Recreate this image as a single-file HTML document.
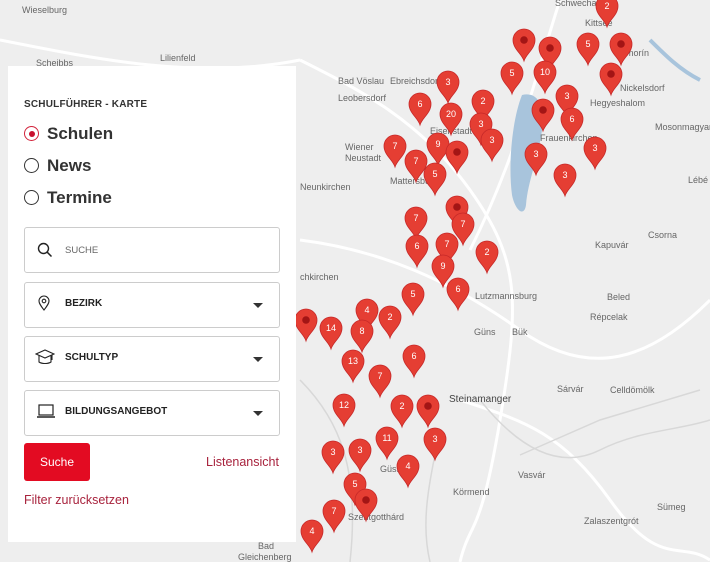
<!DOCTYPE html>
<html><head><meta charset="utf-8"><style>
html,body{margin:0;padding:0;width:710px;height:562px;overflow:hidden;background:#eeeeee;font-family:"Liberation Sans",sans-serif}
svg.map{position:absolute;left:0;top:0}
.panel{position:absolute;left:8px;top:66px;width:288px;height:476px;background:#fff}
.t{position:absolute;color:#222}
.h{left:16px;top:33px;font-size:10px;font-weight:bold;letter-spacing:.2px;color:#333}
.r{left:16px;font-size:17px;font-weight:bold;color:#333}
.r i{display:inline-block;width:13px;height:13px;border:1.5px solid #333;border-radius:50%;vertical-align:-2px;margin-right:8px;position:relative}
.r i.on{border-color:#d2223a}
.r i.on:after{content:"";position:absolute;left:3.5px;top:3.5px;width:6px;height:6px;border-radius:50%;background:#c8102e}
.box{position:absolute;left:16px;width:254px;border:1px solid #ccc;border-radius:3px;background:#fff}
.box span{position:absolute;left:40px;font-size:10px;font-weight:bold;color:#222;top:15px}
.box .ic{position:absolute;left:12px;top:12px}
.box .ar{position:absolute;right:16px;top:20px;width:0;height:0;border-left:5px solid transparent;border-right:5px solid transparent;border-top:5px solid #333}
.btn{position:absolute;left:16px;top:377px;width:66px;height:38px;background:#e30b22;border-radius:3px;color:#fff;font-size:12px;text-align:center;line-height:38px}
.lk{position:absolute;color:#a8233d;font-size:12.5px}
</style></head><body>
<svg class="map" width="710" height="562" viewBox="0 0 710 562">
<defs>
<g id="pin"><path d="M0,21 C-2,14 -11,9 -11,0 A11,11 0 1 1 11,0 C11,9 2,14 0,21Z" fill="#e53e33" stroke="#c62828" stroke-width="0.8"/></g>
</defs>
<g fill="none" stroke="#fff" stroke-width="3">
<path d="M300,60 C360,90 420,120 470,190 S520,300 500,420 S470,520 460,562"/>
<path d="M300,240 C380,250 450,280 520,330 S650,360 710,300"/>
<path d="M460,400 C520,420 560,430 610,500 S680,540 710,560"/>
<path d="M560,0 C540,60 520,150 470,250"/>
<path d="M0,40 C100,60 200,80 300,60"/>
</g>
<g fill="none" stroke="#d8d8d8" stroke-width="1.5">
<path d="M480,400 C520,450 560,470 600,450 S680,430 710,420"/>
<path d="M520,455 L600,420 L700,390"/>
<path d="M440,430 C430,480 420,520 430,562"/>
<path d="M300,380 C340,420 360,470 350,562"/>
</g>
<path d="M522,95 C535,92 545,100 542,130 C538,160 528,180 526,205 C524,218 515,210 512,195 C508,165 512,120 522,95Z" fill="#a8c4dc"/>
<path d="M650,40 C665,55 680,70 700,80" stroke="#a8c4dc" stroke-width="4" fill="none"/>
<g font-size="9" fill="#666" font-family="Liberation Sans,sans-serif">
<text x="22" y="13">Wieselburg</text><text x="36" y="66">Scheibbs</text><text x="160" y="61">Lilienfeld</text>
<text x="338" y="84">Bad Vöslau</text><text x="338" y="101">Leobersdorf</text><text x="390" y="84">Ebreichsdorf</text>
<text x="345" y="150">Wiener</text><text x="345" y="161">Neustadt</text><text x="300" y="190">Neunkirchen</text>
<text x="390" y="184">Mattersburg</text><text x="430" y="134">Eisenstadt</text><text x="540" y="141">Frauenkirchen</text>
<text x="590" y="106">Hegyeshalom</text><text x="620" y="91">Nickelsdorf</text><text x="655" y="130">Mosonmagyaróvár</text>
<text x="595" y="248">Kapuvár</text><text x="648" y="238">Csorna</text><text x="607" y="300">Beled</text>
<text x="590" y="320">Répcelak</text><text x="475" y="299">Lutzmannsburg</text><text x="474" y="335">Güns</text>
<text x="512" y="335">Bük</text><text x="449" y="402" font-size="10" fill="#444">Steinamanger</text>
<text x="557" y="392">Sárvár</text><text x="610" y="393">Celldömölk</text><text x="518" y="478">Vasvár</text>
<text x="453" y="495">Körmend</text><text x="584" y="524">Zalaszentgrót</text><text x="657" y="510">Sümeg</text>
<text x="348" y="520">Szentgotthárd</text><text x="258" y="549">Bad</text><text x="238" y="560">Gleichenberg</text>
<text x="585" y="26">Kittsee</text><text x="615" y="56">Šamorín</text><text x="555" y="6">Schwechat</text>
<text x="688" y="183">Lébé</text><text x="300" y="280">chkirchen</text><text x="380" y="472">Güssi</text>
</g>
</svg>
<svg class="map" width="710" height="562" viewBox="0 0 710 562" font-family="Liberation Sans,sans-serif" font-size="9" text-anchor="middle">
<defs><g id="pin2"><path d="M0,21 C-2,14 -11,9 -11,0 A11,11 0 1 1 11,0 C11,9 2,14 0,21Z" fill="#e53e33" stroke="#c62828" stroke-width="0.8"/></g></defs>
<g transform="translate(524,40)"><use href="#pin2"/><circle r="3.8" fill="#a31515"/></g>
<g transform="translate(550,48)"><use href="#pin2"/><circle r="3.8" fill="#a31515"/></g>
<g transform="translate(588,44)"><use href="#pin2"/><text y="3" fill="#fff">5</text></g>
<g transform="translate(621,44)"><use href="#pin2"/><circle r="3.8" fill="#a31515"/></g>
<g transform="translate(607,6)"><use href="#pin2"/><text y="3" fill="#fff">2</text></g>
<g transform="translate(545,72)"><use href="#pin2"/><text y="3" fill="#fff">10</text></g>
<g transform="translate(512,73)"><use href="#pin2"/><text y="3" fill="#fff">5</text></g>
<g transform="translate(611,74)"><use href="#pin2"/><circle r="3.8" fill="#a31515"/></g>
<g transform="translate(448,82)"><use href="#pin2"/><text y="3" fill="#fff">3</text></g>
<g transform="translate(483,101)"><use href="#pin2"/><text y="3" fill="#fff">2</text></g>
<g transform="translate(567,96)"><use href="#pin2"/><text y="3" fill="#fff">3</text></g>
<g transform="translate(420,104)"><use href="#pin2"/><text y="3" fill="#fff">6</text></g>
<g transform="translate(451,114)"><use href="#pin2"/><text y="3" fill="#fff">20</text></g>
<g transform="translate(543,110)"><use href="#pin2"/><circle r="3.8" fill="#a31515"/></g>
<g transform="translate(572,119)"><use href="#pin2"/><text y="3" fill="#fff">6</text></g>
<g transform="translate(481,124)"><use href="#pin2"/><text y="3" fill="#fff">3</text></g>
<g transform="translate(492,140)"><use href="#pin2"/><text y="3" fill="#fff">3</text></g>
<g transform="translate(438,144)"><use href="#pin2"/><text y="3" fill="#fff">9</text></g>
<g transform="translate(457,152)"><use href="#pin2"/><circle r="3.8" fill="#a31515"/></g>
<g transform="translate(395,146)"><use href="#pin2"/><text y="3" fill="#fff">7</text></g>
<g transform="translate(416,161)"><use href="#pin2"/><text y="3" fill="#fff">7</text></g>
<g transform="translate(536,154)"><use href="#pin2"/><text y="3" fill="#fff">3</text></g>
<g transform="translate(595,148)"><use href="#pin2"/><text y="3" fill="#fff">3</text></g>
<g transform="translate(435,174)"><use href="#pin2"/><text y="3" fill="#fff">5</text></g>
<g transform="translate(565,175)"><use href="#pin2"/><text y="3" fill="#fff">3</text></g>
<g transform="translate(457,207)"><use href="#pin2"/><circle r="3.8" fill="#a31515"/></g>
<g transform="translate(416,218)"><use href="#pin2"/><text y="3" fill="#fff">7</text></g>
<g transform="translate(463,224)"><use href="#pin2"/><text y="3" fill="#fff">7</text></g>
<g transform="translate(447,244)"><use href="#pin2"/><text y="3" fill="#fff">7</text></g>
<g transform="translate(417,246)"><use href="#pin2"/><text y="3" fill="#fff">6</text></g>
<g transform="translate(487,252)"><use href="#pin2"/><text y="3" fill="#fff">2</text></g>
<g transform="translate(443,266)"><use href="#pin2"/><text y="3" fill="#fff">9</text></g>
<g transform="translate(413,294)"><use href="#pin2"/><text y="3" fill="#fff">5</text></g>
<g transform="translate(458,289)"><use href="#pin2"/><text y="3" fill="#fff">6</text></g>
<g transform="translate(367,310)"><use href="#pin2"/><text y="3" fill="#fff">4</text></g>
<g transform="translate(390,317)"><use href="#pin2"/><text y="3" fill="#fff">2</text></g>
<g transform="translate(306,320)"><use href="#pin2"/><circle r="3.8" fill="#a31515"/></g>
<g transform="translate(331,328)"><use href="#pin2"/><text y="3" fill="#fff">14</text></g>
<g transform="translate(362,331)"><use href="#pin2"/><text y="3" fill="#fff">8</text></g>
<g transform="translate(353,361)"><use href="#pin2"/><text y="3" fill="#fff">13</text></g>
<g transform="translate(414,356)"><use href="#pin2"/><text y="3" fill="#fff">6</text></g>
<g transform="translate(380,376)"><use href="#pin2"/><text y="3" fill="#fff">7</text></g>
<g transform="translate(344,405)"><use href="#pin2"/><text y="3" fill="#fff">12</text></g>
<g transform="translate(402,406)"><use href="#pin2"/><text y="3" fill="#fff">2</text></g>
<g transform="translate(428,406)"><use href="#pin2"/><circle r="3.8" fill="#a31515"/></g>
<g transform="translate(387,438)"><use href="#pin2"/><text y="3" fill="#fff">11</text></g>
<g transform="translate(435,439)"><use href="#pin2"/><text y="3" fill="#fff">3</text></g>
<g transform="translate(360,450)"><use href="#pin2"/><text y="3" fill="#fff">3</text></g>
<g transform="translate(333,452)"><use href="#pin2"/><text y="3" fill="#fff">3</text></g>
<g transform="translate(408,466)"><use href="#pin2"/><text y="3" fill="#fff">4</text></g>
<g transform="translate(355,484)"><use href="#pin2"/><text y="3" fill="#fff">5</text></g>
<g transform="translate(366,500)"><use href="#pin2"/><circle r="3.8" fill="#a31515"/></g>
<g transform="translate(334,511)"><use href="#pin2"/><text y="3" fill="#fff">7</text></g>
<g transform="translate(312,531)"><use href="#pin2"/><text y="3" fill="#fff">4</text></g>
</svg>
<div class="panel">
<div class="t h">SCHULFÜHRER - KARTE</div>
<div class="t r" style="top:58px"><i class="on"></i>Schulen</div>
<div class="t r" style="top:90px"><i></i>News</div>
<div class="t r" style="top:122px"><i></i>Termine</div>
<div class="box" style="top:161px;height:44px">
<svg class="ic" width="16" height="16" viewBox="0 0 16 16" style="top:14px"><circle cx="6.5" cy="6.5" r="5" fill="none" stroke="#222" stroke-width="1.4"/><path d="M10.2,10.2 L14.5,14.5" stroke="#222" stroke-width="1.5"/></svg>
<span style="font-weight:normal;color:#666;font-size:9.5px;top:17px">SUCHE</span></div>
<div class="box" style="top:216px;height:44px">
<svg class="ic" width="14" height="16" viewBox="0 0 14 16"><path d="M7,15 C4,11 2,8.5 2,6 A5,5 0 0 1 12,6 C12,8.5 10,11 7,15Z" fill="none" stroke="#222" stroke-width="1.1"/><circle cx="7" cy="6" r="1.8" fill="none" stroke="#222" stroke-width="1.1"/></svg>
<span>BEZIRK</span><div class="ar"></div></div>
<div class="box" style="top:270px;height:44px">
<svg class="ic" width="20" height="16" viewBox="0 0 20 16" style="left:10px"><path d="M1,5 L10,1 L19,5 L10,9Z M4,6.5 V13 C7,15 13,15 16,13 V6.5" fill="none" stroke="#222" stroke-width="1.1"/><path d="M17,6 V11" stroke="#222" stroke-width="1.1"/></svg>
<span>SCHULTYP</span><div class="ar"></div></div>
<div class="box" style="top:324px;height:44px">
<svg class="ic" width="20" height="16" viewBox="0 0 20 16" style="left:11px"><rect x="3" y="2" width="14" height="10" fill="none" stroke="#222" stroke-width="1.2"/><path d="M1,14 H19" stroke="#222" stroke-width="1.5"/></svg>
<span>BILDUNGSANGEBOT</span><div class="ar"></div></div>
<div class="btn">Suche</div>
<div class="lk" style="left:198px;top:389px">Listenansicht</div>
<div class="lk" style="left:16px;top:427px">Filter zurücksetzen</div>
</div>
</body></html>
